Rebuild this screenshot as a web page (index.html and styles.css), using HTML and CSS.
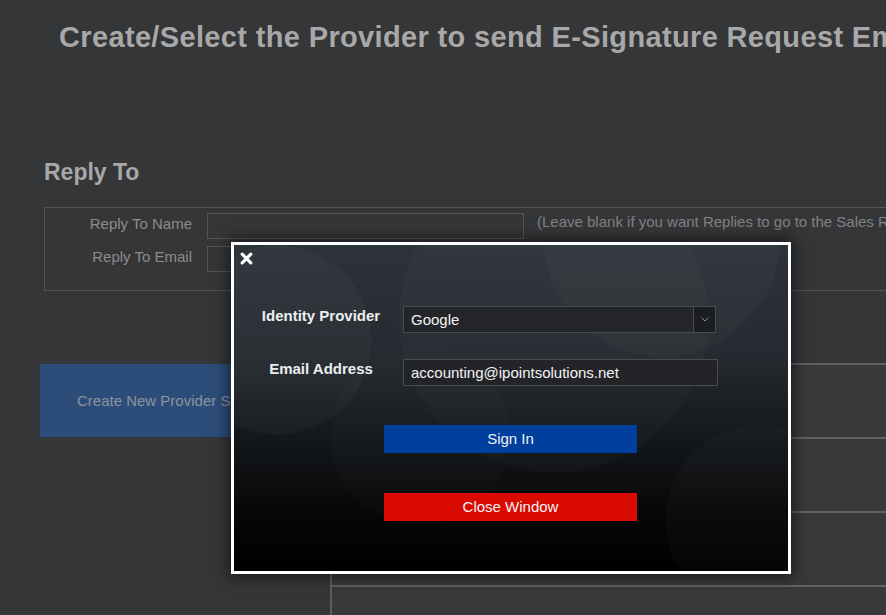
FILE: index.html
```html
<!DOCTYPE html>
<html lang="en">
<head>
<meta charset="utf-8">
<title>E-Signature Provider</title>
<link rel="stylesheet" href="styles.css">
</head>
<body>
<div class="page">
  <h1 class="title">Create/Select the Provider to send E-Signature Request Emails</h1>

  <h2 class="section-title">Reply To</h2>
  <div class="reply-box">
    <div class="reply-grid">
      <label class="reply-label">Reply To Name</label>
      <input class="reply-input" type="text">
      <span class="reply-hint">(Leave blank if you want Replies to go to the Sales Rep)</span>
      <label class="reply-label">Reply To Email</label>
      <input class="reply-input" type="text">
      <span></span>
    </div>
  </div>

  <div class="providers">
    <div class="new-provider">Create New Provider Setup</div>
    <div class="provider-table">
      <div class="provider-row"></div>
      <div class="provider-row"></div>
      <div class="provider-row"></div>
      <div class="provider-row"></div>
    </div>
  </div>
</div>

<div class="modal">
  <button class="modal-close" type="button" aria-label="Close">
    <svg width="13" height="13" viewBox="0 0 13 13"><path d="M2.2 2.2 L10.8 10.8 M10.8 2.2 L2.2 10.8" stroke="#fff" stroke-width="3.2" stroke-linecap="round" fill="none"/></svg>
  </button>
  <div class="modal-form">
    <label class="modal-label">Identity Provider</label>
    <div class="fake-select">
      <span class="fake-select-value">Google</span>
      <span class="fake-select-arrow"><svg width="8" height="5" viewBox="0 0 8 5"><path d="M0.5 0.5 L4 4 L7.5 0.5" stroke="#8d8f92" stroke-width="1" fill="none"/></svg></span>
    </div>
    <label class="modal-label">Email Address</label>
    <input class="modal-input" type="text" value="accounting@ipointsolutions.net">
  </div>
  <div class="modal-actions">
    <button class="btn btn-signin" type="button">Sign In</button>
    <button class="btn btn-close" type="button">Close Window</button>
  </div>
</div>
</body>
</html>
```

FILE: styles.css
```css
html, body {
  margin: 0;
  padding: 0;
  height: 100%;
  overflow: hidden;
}
body {
  background: #353638;
  font-family: "Liberation Sans", Arial, sans-serif;
  position: relative;
}
.page {
  width: 1300px;
}
.title {
  margin: 0;
  padding: 20px 0 0 59px;
  font-size: 29px;
  line-height: 34px;
  letter-spacing: 0.35px;
  font-weight: bold;
  color: #a8a8a9;
  white-space: nowrap;
}
.section-title {
  margin: 104px 0 0 44px;
  font-size: 23px;
  line-height: 28px;
  font-weight: bold;
  color: #a8a8a9;
}
.reply-box {
  margin: 21px 0 0 44px;
  width: 1000px;
  border: 1px solid #535354;
  padding: 5px 0 18px 0;
}
.reply-grid {
  display: grid;
  grid-template-columns: 147px 317px auto;
  column-gap: 15px;
  row-gap: 7px;
  align-items: start;
}
.reply-label {
  font-size: 15px;
  line-height: 22px;
  color: #8b8c8d;
  text-align: right;
}
.reply-input {
  box-sizing: border-box;
  height: 26px;
  width: 317px;
  margin: 0;
  background: transparent;
  border: 1px solid #555658;
  font: 15px "Liberation Sans", Arial, sans-serif;
}
.reply-hint {
  margin-left: -2px;
  font-size: 15px;
  line-height: 17px;
  color: #808183;
  white-space: nowrap;
}
.providers {
  display: flex;
  align-items: flex-start;
  margin-top: 72px;
}
.new-provider {
  box-sizing: border-box;
  margin: 1px 0 0 40px;
  width: 270px;
  height: 73px;
  padding-left: 37px;
  display: flex;
  align-items: center;
  background: #2c4c7a;
  color: #8d949c;
  font-size: 15px;
  white-space: nowrap;
  overflow: hidden;
}
.provider-table {
  margin-left: 20px;
  width: 900px;
  border-left: 2px solid #5e5e60;
}
.provider-row {
  height: 72px;
  border-top: 2px solid #616163;
  background: #39393b;
}

/* Modal */
.modal {
  position: absolute;
  left: 231px;
  top: 242px;
  width: 560px;
  height: 332px;
  box-sizing: border-box;
  border: 3px solid #ffffff;
  box-shadow: 0 0 14px 3px rgba(0, 0, 0, 0.55);
  background:
    radial-gradient(circle 95px at 43px 95px, rgba(255,255,255,0.028) 0, rgba(255,255,255,0.028) 94px, transparent 95px),
    radial-gradient(circle 155px at 320px 73px, rgba(255,255,255,0.02) 0, rgba(255,255,255,0.02) 154px, transparent 155px),
    radial-gradient(circle 119px at 428px -7px, rgba(255,255,255,0.025) 0, rgba(255,255,255,0.025) 118px, transparent 119px),
    radial-gradient(circle 95px at 526px 275px, rgba(255,255,255,0.018) 0, rgba(255,255,255,0.018) 94px, transparent 95px),
    radial-gradient(circle 90px at 186px 190px, rgba(255,255,255,0.012) 0, rgba(255,255,255,0.012) 89px, transparent 90px),
    linear-gradient(to bottom, #2c3339 0%, #252a30 35%, #14171a 60%, #060708 82%, #000000 100%);
}
.modal-close {
  display: block;
  margin: 7px 0 0 6px;
  padding: 0;
  width: 13px;
  height: 13px;
  border: 0;
  background: none;
  line-height: 0;
  cursor: pointer;
}
.modal-form {
  display: grid;
  grid-template-columns: 150px 315px;
  column-gap: 5px;
  row-gap: 26px;
  margin-top: 41px;
  padding-left: 12px;
}
.modal-label {
  font-size: 15px;
  line-height: 20px;
  font-weight: bold;
  color: #eceef0;
  text-align: center;
  white-space: nowrap;
}
.fake-select {
  box-sizing: border-box;
  height: 27px;
  display: flex;
  background: #232529;
  border: 1px solid #4a4b4d;
  margin-left: 2px;
}
.fake-select-value {
  flex: 1;
  padding-left: 7px;
  font-size: 15px;
  line-height: 25px;
  color: #f2f2f2;
}
.fake-select-arrow {
  width: 21px;
  display: flex;
  align-items: center;
  justify-content: center;
  background: #1c1d20;
  border-left: 1px solid #4a4b4d;
}
.modal-input {
  box-sizing: border-box;
  height: 27px;
  width: 315px;
  margin: 0 0 0 2px;
  padding: 0 0 0 7px;
  background: #222428;
  border: 1px solid #4a4b4d;
  color: #f4f4f4;
  font: 15px "Liberation Sans", Arial, sans-serif;
}
.modal-actions {
  display: flex;
  flex-direction: column;
  gap: 40px;
  margin: 39px 0 0 150px;
  width: 253px;
}
.btn {
  height: 28px;
  width: 253px;
  margin: 0;
  padding: 0;
  border: 0;
  font: 15px/28px "Liberation Sans", Arial, sans-serif;
  color: #f0f2f6;
  cursor: pointer;
}
.btn-signin {
  background: #003f9d;
}
.btn-close {
  background: #d90b00;
}
```
